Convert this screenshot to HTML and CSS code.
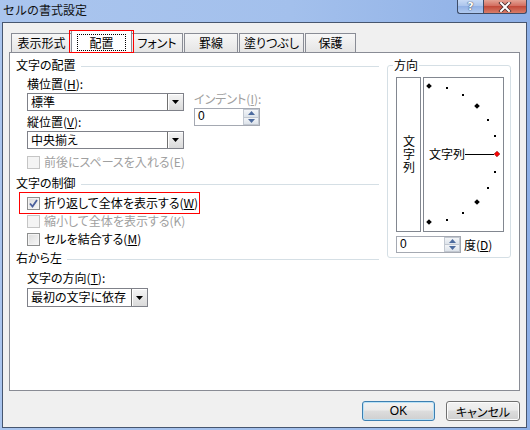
FILE: index.html
```html
<!DOCTYPE html>
<html lang="ja">
<head>
    <meta charset="UTF-8">
    <title>セルの書式設定</title>
    <link rel="stylesheet" href="styles.css">
</head>
<body>

<div class="window">

    <!-- Title bar -->
    <div class="titlebar">
        <span class="title">セルの書式設定</span>
        <div class="caption-btns">
            <span class="cap-btn help">?</span>
            <span class="cap-btn close">
                <svg width="14" height="10" viewBox="0 0 14 10">
                    <path d="M3 1 L11 9 M11 1 L3 9" stroke="#4a3030" stroke-width="3.6" stroke-linecap="square"/>
                    <path d="M3 1 L11 9 M11 1 L3 9" stroke="#fff" stroke-width="2" stroke-linecap="square"/>
                </svg>
            </span>
        </div>
    </div>

    <div class="client">

        <!-- Tabs -->
        <div class="tabs">
            <div class="tab w-61">表示形式</div>
            <div class="tab active"><span class="focus">配置</span></div>
            <div class="tab w-52">フォント</div>
            <div class="tab w-54">罫線</div>
            <div class="tab w-65">塗りつぶし</div>
            <div class="tab w-51">保護</div>
        </div>

        <!-- Tab page -->
        <div class="panel">
            <div class="left-col">
                <div class="legend"><span>文字の配置</span></div>

                <div class="pos-row">
                    <div class="pos-col">
                        <div class="label">横位置(<u>H</u>):</div>
                        <div class="combo combo-wide">
                            <span class="combo-text">標準</span>
                            <span class="combo-btn"><svg width="7" height="4" viewBox="0 0 7 4"><polygon points="0,0 7,0 3.5,4" fill="#000"/></svg></span>
                        </div>
                        <div class="label mt-4">縦位置(<u>V</u>):</div>
                        <div class="combo combo-wide">
                            <span class="combo-text">中央揃え</span>
                            <span class="combo-btn"><svg width="7" height="4" viewBox="0 0 7 4"><polygon points="0,0 7,0 3.5,4" fill="#000"/></svg></span>
                        </div>
                    </div>
                    <div class="indent-col">
                        <div class="label-plain disabled">インデント(<u>I</u>):</div>
                        <div class="spin spin-indent">
                            <span class="spin-text">0</span>
                            <span class="spin-btns">
                                <span class="spin-up"><svg width="7" height="4" viewBox="0 0 7 4"><polygon points="0,4 7,4 3.5,0" fill="#4d6b9e"/></svg></span>
                                <span class="spin-down"><svg width="7" height="4" viewBox="0 0 7 4"><polygon points="0,0 7,0 3.5,4" fill="#4d6b9e"/></svg></span>
                            </span>
                        </div>
                    </div>
                </div>

                <div class="check disabled mt-6">
                    <span class="box"></span>前後にスペースを入れる(E)
                </div>

                <div class="legend mt-7"><span>文字の制御</span></div>

                <div class="check highlight">
                    <span class="box">
                        <svg width="11" height="11" viewBox="0 0 11 11"><path d="M2 5.5 L4.5 8.5 L9 2" fill="none" stroke="#4b5f9c" stroke-width="1.8"/></svg>
                    </span>折り返して全体を表示する(<u>W</u>)
                </div>
                <div class="check disabled">
                    <span class="box"></span>縮小して全体を表示する(K)
                </div>
                <div class="check mt-4">
                    <span class="box"></span>セルを結合する(<u>M</u>)
                </div>

                <div class="legend mt-5"><span>右から左</span></div>
                <div class="label mt-6">文字の方向(<u>T</u>):</div>
                <div class="combo combo-dir">
                    <span class="combo-text">最初の文字に依存</span>
                    <span class="combo-btn"><svg width="7" height="4" viewBox="0 0 7 4"><polygon points="0,0 7,0 3.5,4" fill="#000"/></svg></span>
                </div>
            </div>

            <!-- Orientation -->
            <div class="dir-group">
                <span class="dir-legend">方向</span>
                <div class="dir-boxes">
                    <div class="vbox"><span class="vtext">文字列</span></div>
                    <div class="dial">
                        <svg width="79" height="153" viewBox="0 0 79 153">
                            <g fill="#000">
                                <polygon points="5,5.2 7.8,8 5,10.8 2.2,8"/>
                                <polygon points="53,25.2 55.8,28 53,30.8 50.2,28"/>
                                <polygon points="53,121.2 55.8,124 53,126.8 50.2,124"/>
                                <polygon points="5,141.2 7.8,144 5,146.8 2.2,144"/>
                                <rect x="22" y="9" width="2" height="2"/>
                                <rect x="38" y="16" width="2" height="2"/>
                                <rect x="63" y="41" width="2" height="2"/>
                                <rect x="70" y="57" width="2" height="2"/>
                                <rect x="70" y="93" width="2" height="2"/>
                                <rect x="63" y="109" width="2" height="2"/>
                                <rect x="38" y="134" width="2" height="2"/>
                                <rect x="22" y="141" width="2" height="2"/>
                            </g>
                            <line x1="41" y1="76.5" x2="70" y2="76.5" stroke="#000" stroke-width="1"/>
                            <polygon points="73,73.2 75.8,76 73,78.8 70.2,76" fill="#f00" stroke="#700" stroke-width="0.6"/>
                            <text x="5" y="80.5" class="dial-text">文字列</text>
                        </svg>
                    </div>
                </div>
                <div class="deg-row">
                    <div class="spin spin-deg">
                        <span class="spin-text">0</span>
                        <span class="spin-btns">
                            <span class="spin-up"><svg width="7" height="4" viewBox="0 0 7 4"><polygon points="0,4 7,4 3.5,0" fill="#4d6b9e"/></svg></span>
                            <span class="spin-down"><svg width="7" height="4" viewBox="0 0 7 4"><polygon points="0,0 7,0 3.5,4" fill="#4d6b9e"/></svg></span>
                        </span>
                    </div>
                    <span class="deg-label">度(<u>D</u>)</span>
                </div>
            </div>
        </div>

        <!-- Dialog buttons -->
        <div class="buttons">
            <button class="btn default">OK</button>
            <button class="btn cancel">キャンセル</button>
        </div>
    </div>
</div>

</body>
</html>
```

FILE: styles.css
```css
/* Basic Styles */
body {
    margin: 0;
    font-family: "Noto Sans CJK JP", "Noto Sans", sans-serif;
    font-size: 12px;
    font-feature-settings: "palt";
    color: #000;
}

u {
    text-underline-offset: 1px;
}

/* Window frame */
.window {
    width: 530px;
    height: 430px;
    display: flex;
    flex-direction: column;
    background: linear-gradient(to right, #aac5ee, #a3c0ec 55%, #8dafe6);
}

.titlebar {
    height: 22px;
    display: flex;
    align-items: flex-start;
    padding-left: 3px;
}

.title {
    line-height: 19px;
    font-feature-settings: normal;
    color: #111;
}

.caption-btns {
    margin-left: auto;
    margin-right: 3px;
    display: flex;
}

.cap-btn {
    height: 14px;
    box-sizing: border-box;
    border: 1px solid #3d4c68;
    border-top: none;
    display: flex;
    align-items: center;
    justify-content: center;
}

.help {
    width: 26px;
    border-right: none;
    border-radius: 0 0 0 3px;
    background: linear-gradient(#c8daf5, #a9c3ec 50%, #94b3e6 50%, #b0c9ef);
    color: #fff;
    font-family: "DejaVu Sans", sans-serif;
    font-weight: bold;
    font-size: 11px;
    text-shadow: 0 0 1px #2b3a55, 0 0 1px #2b3a55;
}

.close {
    width: 44px;
    border-radius: 0 0 3px 0;
    background: linear-gradient(#e4a395, #d1685a 50%, #c24a3a 50%, #d87c68);
}

/* Client area */
.client {
    flex: 1;
    margin: 0 3px 2px 2px;
    border: 1px solid #47566f;
    background-color: #f0f0f0;
    display: flex;
    flex-direction: column;
}

/* Tabs */
.tabs {
    display: flex;
    align-items: flex-end;
    column-gap: 1px;
    height: 22px;
    margin: 7px 0 0 8px;
}

.tab {
    height: 19px;
    box-sizing: border-box;
    border: 1px solid #898c95;
    border-bottom: none;
    background: linear-gradient(#f7f7f7, #e5e5e5);
    text-align: center;
    line-height: 17px;
}

.w-61 { width: 61px; }
.w-52 { width: 52px; }
.w-54 { width: 54px; }
.w-65 { width: 65px; }
.w-51 { width: 51px; }

.tab.active {
    position: relative;
    z-index: 1;
    width: 61px;
    height: 23px;
    margin: 0 -2px -1px -2px;
    padding-top: 3px;
    background: #fff;
    line-height: 15px;
}

.tab.active::after {
    content: "";
    position: absolute;
    left: -3px;
    right: -3px;
    top: -1px;
    bottom: 0;
    border: 1px solid #f00;
}

.focus {
    display: inline-block;
    padding: 0 11px;
    border: 1px dotted #000;
}

/* Tab page */
.panel {
    margin-left: 6px;
    width: 511px;
    height: 339px;
    box-sizing: border-box;
    border: 1px solid #898c95;
    background-color: #fff;
    display: flex;
    padding: 5px 8px 0 6px;
    column-gap: 8px;
}

.left-col {
    width: 363px;
    display: flex;
    flex-direction: column;
}

.legend {
    display: flex;
    align-items: center;
    height: 14px;
    line-height: 14px;
}

.legend::after {
    content: "";
    flex: 1;
    margin-left: 5px;
    margin-top: 2px;
    border-top: 1px solid #d5dfe5;
}

.label {
    line-height: 14px;
    padding-left: 11px;
    margin-top: 5px;
}

.label-plain {
    line-height: 14px;
}

.disabled {
    color: #a0a0a0;
}

.mt-4 { margin-top: 4px; }
.mt-5 { margin-top: 5px; }
.mt-6 { margin-top: 6px; }
.mt-7 { margin-top: 7px; }

.pos-row {
    display: flex;
}

.pos-col {
    display: flex;
    flex-direction: column;
}

.indent-col {
    display: flex;
    flex-direction: column;
    padding-top: 20px;
    margin-left: 10px;
}

/* Combo boxes */
.combo {
    margin: 2px 0 0 11px;
    height: 18px;
    box-sizing: border-box;
    border: 1px solid #7f8189;
    background: #fff;
    display: flex;
}

.combo-wide {
    width: 157px;
}

.combo-dir {
    width: 121px;
    height: 19px;
    margin-top: 3px;
}

.combo-text {
    flex: 1;
    padding-left: 3px;
    line-height: 16px;
}

.combo-btn {
    width: 16px;
    box-sizing: border-box;
    border-left: 1px solid #707070;
    box-shadow: inset 1px 1px 0 #fff;
    background: linear-gradient(#f5f5f5, #dadada);
    display: flex;
    align-items: center;
    justify-content: center;
}

/* Spin boxes */
.spin {
    box-sizing: border-box;
    border: 1px solid #a5a9b2;
    background: #fff;
    display: flex;
}

.spin-indent {
    width: 66px;
    height: 18px;
    margin-top: 2px;
}

.spin-deg {
    width: 65px;
    height: 17px;
}

.spin-text {
    flex: 1;
    padding-left: 3px;
    line-height: 15px;
    font-family: "Liberation Sans", sans-serif;
}

.spin-btns {
    width: 16px;
    display: flex;
    flex-direction: column;
}

.spin-up,
.spin-down {
    flex: 1;
    display: flex;
    align-items: center;
    justify-content: center;
    background: linear-gradient(#f3f5f8, #dde3ea);
    border: 1px solid #c2c8d1;
}

.spin-up {
    border-bottom: none;
}

/* Check boxes */
.check {
    display: flex;
    align-items: center;
    height: 14px;
    line-height: 14px;
    padding-left: 11px;
}

.check .box {
    width: 13px;
    height: 13px;
    box-sizing: border-box;
    margin-right: 4px;
    border: 1px solid #8e8f8f;
    background: linear-gradient(135deg, #dcdcdc, #f8f8f8);
    box-shadow: inset 0 0 0 1px #f4f4f4;
    display: flex;
    align-items: center;
    justify-content: center;
}

.check.disabled .box {
    border-color: #c5c5c5;
    background: #f4f4f4;
}

.check.highlight {
    width: 181px;
    height: 22px;
    box-sizing: border-box;
    margin: 2px 0 0 3px;
    padding-left: 7px;
    border: 1px solid #f00;
}

/* Orientation group */
.dir-group {
    position: relative;
    width: 124px;
    height: 193px;
    box-sizing: border-box;
    margin-top: 7px;
    padding: 11px 6px 0 8px;
    border: 1px solid #d5dfe5;
    border-radius: 3px;
}

.dir-legend {
    position: absolute;
    top: -8px;
    left: 5px;
    padding: 0 1px;
    background: #fff;
    line-height: 14px;
}

.dir-boxes {
    display: flex;
    column-gap: 2px;
}

.vbox,
.dial {
    height: 155px;
    box-sizing: border-box;
    border: 1px solid #828790;
}

.vbox {
    width: 25px;
    display: flex;
    align-items: center;
    justify-content: center;
}

.vtext {
    writing-mode: vertical-rl;
    font-feature-settings: normal;
    line-height: 14px;
    letter-spacing: 1px;
}

.dial {
    width: 81px;
}

.dial svg {
    display: block;
}

.dial-text {
    font-family: "Noto Sans CJK JP", sans-serif;
    font-size: 12px;
}

.deg-row {
    display: flex;
    align-items: center;
    margin-top: 4px;
}

.deg-label {
    margin-left: 3px;
    line-height: 14px;
}

/* Dialog buttons */
.buttons {
    display: flex;
    justify-content: flex-end;
    column-gap: 11px;
    margin: 10px 6px 0 0;
}

.btn {
    height: 20px;
    padding: 0;
    border: 1px solid #707070;
    border-radius: 3px;
    background: linear-gradient(#f2f2f2, #ebebeb 45%, #dddddd 50%, #cfcfcf);
    box-shadow: inset 0 0 0 1px #fcfcfc;
    font-family: "Noto Sans CJK JP", sans-serif;
    font-size: 12px;
    font-feature-settings: "palt";
    line-height: 17px;
    color: #000;
}

.btn.default {
    width: 73px;
    border-color: #3c7fb1;
    box-shadow: inset 0 0 0 1px #b9e1f6;
    font-family: "Liberation Sans", sans-serif;
}

.btn.cancel {
    width: 74px;
}
```
